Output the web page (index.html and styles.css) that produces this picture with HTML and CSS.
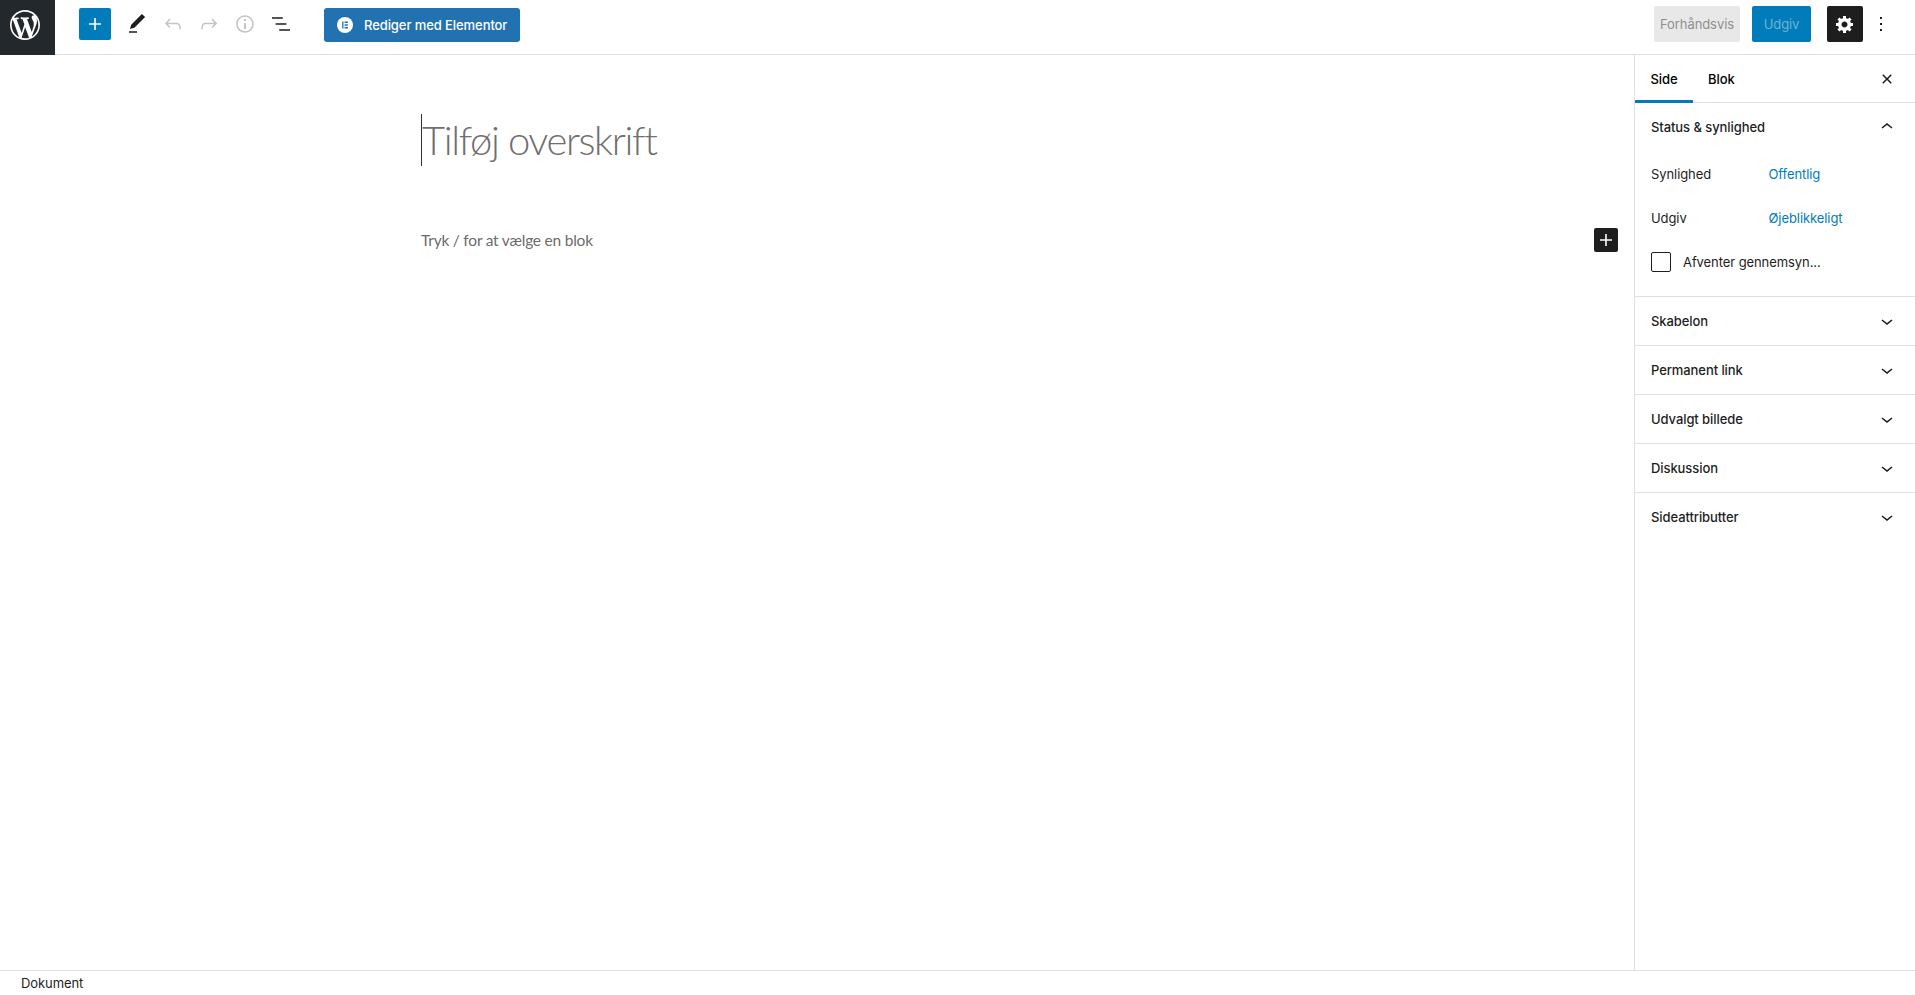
FILE: index.html
```html
<!DOCTYPE html>
<html lang="da">
<head>
<meta charset="utf-8">
<title>Tilføj ny side</title>
<link rel="stylesheet" href="styles.css">
</head>
<body>
<div class="app">
  <header class="topbar">
    <a class="wp-logo" href="#" aria-label="WordPress">
      <svg viewBox="0 0 20 20" width="30" height="30"><path fill="#fff" d="M20 10c0-5.51-4.49-10-10-10C4.48 0 0 4.49 0 10c0 5.52 4.48 10 10 10 5.51 0 10-4.48 10-10zM7.78 15.37L4.37 6.22c.55-.02 1.17-.08 1.17-.08.5-.06.44-1.13-.06-1.11 0 0-1.45.11-2.37.11-.18 0-.37 0-.58-.01C4.12 2.69 6.87 1.11 10 1.11c2.33 0 4.45.87 6.05 2.34-.68-.11-1.65.39-1.65 1.58 0 .74.45 1.36.9 2.1.35.61.55 1.36.55 2.46 0 1.49-1.4 5-1.4 5l-3.03-8.37c.54-.02.82-.17.82-.17.5-.05.44-1.25-.06-1.22 0 0-1.44.12-2.38.12-.87 0-2.33-.12-2.33-.12-.5-.03-.56 1.2-.06 1.22l.92.08 1.26 3.41zM17.41 10c.24-.64.74-1.87.43-4.25.7 1.29 1.05 2.71 1.05 4.25 0 3.29-1.73 6.24-4.4 7.78.97-2.59 1.94-5.2 2.92-7.78zM6.1 18.09C3.12 16.65 1.11 13.53 1.11 10c0-1.3.23-2.48.72-3.59C3.25 10.3 4.67 14.2 6.1 18.09zm4.03-6.63l2.58 6.98c-.86.29-1.76.45-2.71.45-.79 0-1.57-.11-2.29-.33.81-2.38 1.62-4.74 2.42-7.1z"/></svg>
    </a>
    <div class="tools">
      <button class="add-btn" aria-label="Tilføj"><svg viewBox="0 0 24 24" width="24" height="24"><path fill="#fff" d="M18 11.2h-5.2V6h-1.6v5.2H6v1.6h5.2V18h1.6v-5.2H18z"/></svg></button>
      <button class="tool" aria-label="Rediger"><svg viewBox="0 0 24 24" width="24" height="24"><path fill="#1e1e1e" d="M20.1 5.1L16.9 2 6.2 12.7l-1.3 4.4 4.5-1.3L20.1 5.1zM4 20.8h8v-1.5H4v1.5z"/></svg></button>
      <button class="tool" aria-label="Fortryd"><svg viewBox="0 0 24 24" width="24" height="24"><path fill="#c4c4c4" d="M18.3 11.7c-.6-.6-1.4-.9-2.3-.9H6.7l2.9-3.3-1.1-1-4.5 5L8.5 16l1-1-2.7-2.7H16c.5 0 .9.2 1.3.5 1 1 1 3.4 1 4.5v.3h1.5v-.2c0-1.5 0-4.3-1.5-5.7z"/></svg></button>
      <button class="tool" aria-label="Gentag"><svg viewBox="0 0 24 24" width="24" height="24"><path fill="#c4c4c4" d="M15.6 6.5l-1.1 1 2.9 3.3H8c-.9 0-1.7.3-2.3.9-1.4 1.5-1.4 4.2-1.4 5.6v.2h1.5v-.3c0-1.1 0-3.5 1-4.5.3-.3.7-.5 1.3-.5h9.2L14.5 15l1.1 1.1 4.6-4.6-4.6-5z"/></svg></button>
      <button class="tool" aria-label="Info"><svg viewBox="0 0 24 24" width="24" height="24"><path fill="#c4c4c4" d="M12 3.2c-4.8 0-8.8 3.9-8.8 8.8 0 4.8 3.9 8.8 8.8 8.8 4.8 0 8.8-3.9 8.8-8.8 0-4.8-4-8.8-8.8-8.8zm0 16c-4 0-7.2-3.3-7.2-7.2C4.8 8 8 4.8 12 4.8s7.2 3.3 7.2 7.2c0 4-3.2 7.2-7.2 7.2zM11 17h2v-6h-2v6zm0-8h2V7h-2v2z"/></svg></button>
      <button class="tool" aria-label="Listevisning"><svg viewBox="0 0 24 24" width="24" height="24"><path fill="#1e1e1e" d="M13.8 5.2H3v1.5h10.8V5.2zm-3.6 12v1.5H21v-1.5H10.2zm7.2-6H6.6v1.5h10.8v-1.5z"/></svg></button>
    </div>
    <button class="elementor-btn">
      <svg viewBox="0 0 16 16" width="16" height="16"><circle cx="8" cy="8" r="8" fill="#fff"/><path fill="#2271b1" d="M5.2 4.6h1.3v6.8H5.2zM7.6 4.6h3.3v1.3H7.6zM7.6 7.35h3.3v1.3H7.6zM7.6 10.1h3.3v1.3H7.6z"/></svg>
      <span>Rediger med Elementor</span>
    </button>
    <div class="actions">
      <button class="preview-btn">Forhåndsvis</button>
      <button class="publish-btn">Udgiv</button>
      <button class="settings-btn" aria-label="Indstillinger"><svg viewBox="0 0 20 20" width="20" height="20"><path fill="#fff" d="M18 12h-2.18c-.17.7-.44 1.35-.81 1.93l1.54 1.54-2.1 2.1-1.54-1.54c-.58.36-1.23.63-1.91.79V19H8v-2.18c-.68-.16-1.33-.43-1.91-.79l-1.54 1.54-2.12-2.12 1.54-1.54c-.36-.58-.63-1.23-.79-1.91H1V9.03h2.17c.16-.7.44-1.35.8-1.94L2.43 5.55l2.1-2.1 1.54 1.54c.58-.37 1.24-.64 1.93-.81V2h3v2.18c.68.16 1.33.43 1.91.79l1.54-1.54 2.12 2.12-1.54 1.54c.36.59.64 1.24.8 1.94H18V12zm-8.5 1.5c1.66 0 3-1.34 3-3s-1.34-3-3-3-3 1.34-3 3 1.34 3 3 3z"/></svg></button>
      <button class="more-btn" aria-label="Mere"><svg viewBox="0 0 24 24" width="24" height="24"><path fill="#1e1e1e" d="M13 19h-2v-2h2v2zm0-6h-2v-2h2v2zm0-6h-2V5h2v2z"/></svg></button>
    </div>
  </header>

  <div class="workspace">
    <main class="editor">
      <h1 class="post-title"><span class="caret"></span>Tilføj overskrift</h1>
      <div class="block-row">
        <p class="block-placeholder">Tryk / for at vælge en blok</p>
        <button class="inline-add" aria-label="Tilføj blok"><svg viewBox="0 0 24 24" width="24" height="24"><path fill="#fff" d="M18 11.2h-5.2V6h-1.6v5.2H6v1.6h5.2V18h1.6v-5.2H18z"/></svg></button>
      </div>
    </main>

    <aside class="sidebar">
      <div class="tabs">
        <button class="tab tab-active">Side</button>
        <button class="tab">Blok</button>
        <button class="close-btn" aria-label="Luk"><svg viewBox="0 0 24 24" width="24" height="24"><path fill="#1e1e1e" d="M12 13.06l3.712 3.713 1.061-1.06L13.061 12l3.712-3.712-1.06-1.06L12 10.938 8.288 7.227l-1.061 1.06L10.939 12l-3.712 3.712 1.06 1.061L12 13.061z"/></svg></button>
      </div>
      <section class="panel panel-open">
        <div class="panel-head"><span>Status &amp; synlighed</span><svg viewBox="0 0 24 24" width="24" height="24"><path fill="#1e1e1e" d="M6.5 12.4L12 8l5.5 4.4-.9 1.2L12 10l-4.5 3.6-1-1.2z"/></svg></div>
        <div class="panel-row"><span class="row-label">Synlighed</span><a class="row-link" href="#">Offentlig</a></div>
        <div class="panel-row"><span class="row-label">Udgiv</span><a class="row-link" href="#">Øjeblikkeligt</a></div>
        <label class="check-row"><span class="checkbox"></span><span>Afventer gennemsyn...</span></label>
      </section>
      <section class="panel"><div class="panel-head"><span>Skabelon</span><svg viewBox="0 0 24 24" width="24" height="24"><path fill="#1e1e1e" d="M17.5 11.6L12 16l-5.5-4.4.9-1.2L12 14l4.5-3.6 1 1.2z"/></svg></div></section>
      <section class="panel"><div class="panel-head"><span>Permanent link</span><svg viewBox="0 0 24 24" width="24" height="24"><path fill="#1e1e1e" d="M17.5 11.6L12 16l-5.5-4.4.9-1.2L12 14l4.5-3.6 1 1.2z"/></svg></div></section>
      <section class="panel"><div class="panel-head"><span>Udvalgt billede</span><svg viewBox="0 0 24 24" width="24" height="24"><path fill="#1e1e1e" d="M17.5 11.6L12 16l-5.5-4.4.9-1.2L12 14l4.5-3.6 1 1.2z"/></svg></div></section>
      <section class="panel"><div class="panel-head"><span>Diskussion</span><svg viewBox="0 0 24 24" width="24" height="24"><path fill="#1e1e1e" d="M17.5 11.6L12 16l-5.5-4.4.9-1.2L12 14l4.5-3.6 1 1.2z"/></svg></div></section>
      <section class="panel panel-last"><div class="panel-head"><span>Sideattributter</span><svg viewBox="0 0 24 24" width="24" height="24"><path fill="#1e1e1e" d="M17.5 11.6L12 16l-5.5-4.4.9-1.2L12 14l4.5-3.6 1 1.2z"/></svg></div></section>
    </aside>
  </div>

  <footer class="statusbar">Dokument</footer>
</div>
</body>
</html>
```

FILE: styles.css
```css
* { box-sizing: border-box; }
html, body { margin: 0; height: 100%; }
body {
  font-family: Inter, "Liberation Sans", sans-serif;
  font-size: 13px;
  letter-spacing: -0.08px;
  color: #1e1e1e;
  background: #fff;
  overflow: hidden;
}
button {
  font: inherit;
  letter-spacing: inherit;
  border: 0;
  background: none;
  padding: 0;
  margin: 0;
  display: flex;
  align-items: center;
  justify-content: center;
}
svg { display: block; flex: none; }

.app { display: flex; flex-direction: column; height: 995px; }

.topbar {
  height: 55px;
  flex: none;
  display: flex;
  align-items: flex-start;
  border-bottom: 1px solid #e0e0e0;
}
.wp-logo {
  width: 55px;
  height: 55px;
  padding: 0 5px 5px 0;
  background: #23282d;
  display: flex;
  align-items: center;
  justify-content: center;
}
.tools {
  display: flex;
  align-items: center;
  margin-left: 24px;
  margin-top: 8px;
}
.add-btn {
  width: 32px;
  height: 32px;
  background: #007cba;
  border-radius: 2px;
  margin-right: 8px;
}
.tool { width: 36px; height: 32px; }
.elementor-btn {
  margin-left: 25px;
  margin-top: 8px;
  width: 196px;
  height: 34px;
  background: #2271b1;
  color: #fff;
  border-radius: 3px;
  font-weight: 500;
  gap: 11px;
  justify-content: flex-start;
  padding-left: 13px;
}
.actions {
  margin-left: auto;
  margin-top: 6px;
  display: flex;
  align-items: center;
}
.preview-btn {
  width: 86px;
  height: 36px;
  background: #e8e8e8;
  color: #8f8f8f;
  border-radius: 2px;
  margin-right: 12px;
}
.publish-btn {
  width: 59px;
  height: 36px;
  background: #007cba;
  color: #6db2d6;
  border-radius: 2px;
  margin-right: 16px;
}
.settings-btn {
  width: 36px;
  height: 36px;
  background: #1e1e1e;
  border-radius: 2px;
}
.more-btn { width: 36px; height: 36px; margin-right: 16px; }

.workspace { flex: 1; display: flex; min-height: 0; }

.editor {
  flex: 1;
  padding: 59px 16px 0 421px;
  min-width: 0;
}
.post-title {
  margin: 0;
  height: 52px;
  display: flex;
  align-items: center;
  font-family: Lato, sans-serif;
  font-weight: 300;
  font-size: 40px;
  letter-spacing: -1.4px;
  color: #6f6f6f;
  white-space: nowrap;
}
.caret {
  width: 1px;
  height: 52px;
  background: #333;
  flex: none;
}
.block-row {
  margin-top: 62px;
  display: flex;
  align-items: center;
  justify-content: space-between;
  height: 24px;
}
.block-placeholder {
  margin: 0;
  font-family: Lato, sans-serif;
  font-size: 15.5px;
  letter-spacing: -0.22px;
  color: #6c6c6c;
}
.inline-add {
  width: 24px;
  height: 24px;
  background: #1e1e1e;
  border-radius: 2px;
}

.sidebar {
  width: 281px;
  flex: none;
  border-left: 1px solid #e0e0e0;
}
.tabs {
  height: 48px;
  display: flex;
  align-items: stretch;
  border-bottom: 1px solid #e0e0e0;
}
.tab {
  height: 48px;
  padding: 0 16px;
  font-weight: 500;
  font-size: 13px;
}
.tab + .tab { padding: 0 15px; }
.tab-active {
  width: 58px;
  box-shadow: inset 0 -3px 0 #007cba;
}
.close-btn {
  margin-left: auto;
  width: 24px;
  margin-right: 16px;
}
.panel { border-bottom: 1px solid #e0e0e0; }
.panel-last { border-bottom: 0; }
.panel-open { padding: 0 0 12px; }
.panel-head {
  height: 48px;
  padding: 0 16px;
  display: flex;
  align-items: center;
  justify-content: space-between;
  font-weight: 500;
}
.panel-open .panel-head { margin-bottom: 1px; }
.panel-row {
  height: 44px;
  padding-left: 16px;
  display: flex;
  align-items: center;
}
.row-label { width: 117.5px; flex: none; }
.row-link { color: #007cba; text-decoration: none; }
.check-row {
  height: 44px;
  padding-left: 16px;
  display: flex;
  align-items: center;
  gap: 12px;
}
.checkbox {
  width: 20px;
  height: 20px;
  border: 1px solid #1e1e1e;
  border-radius: 2px;
  background: #fff;
}

.statusbar {
  height: 25px;
  flex: none;
  border-top: 1px solid #e0e0e0;
  padding-left: 21px;
  display: flex;
  align-items: center;
}
```
